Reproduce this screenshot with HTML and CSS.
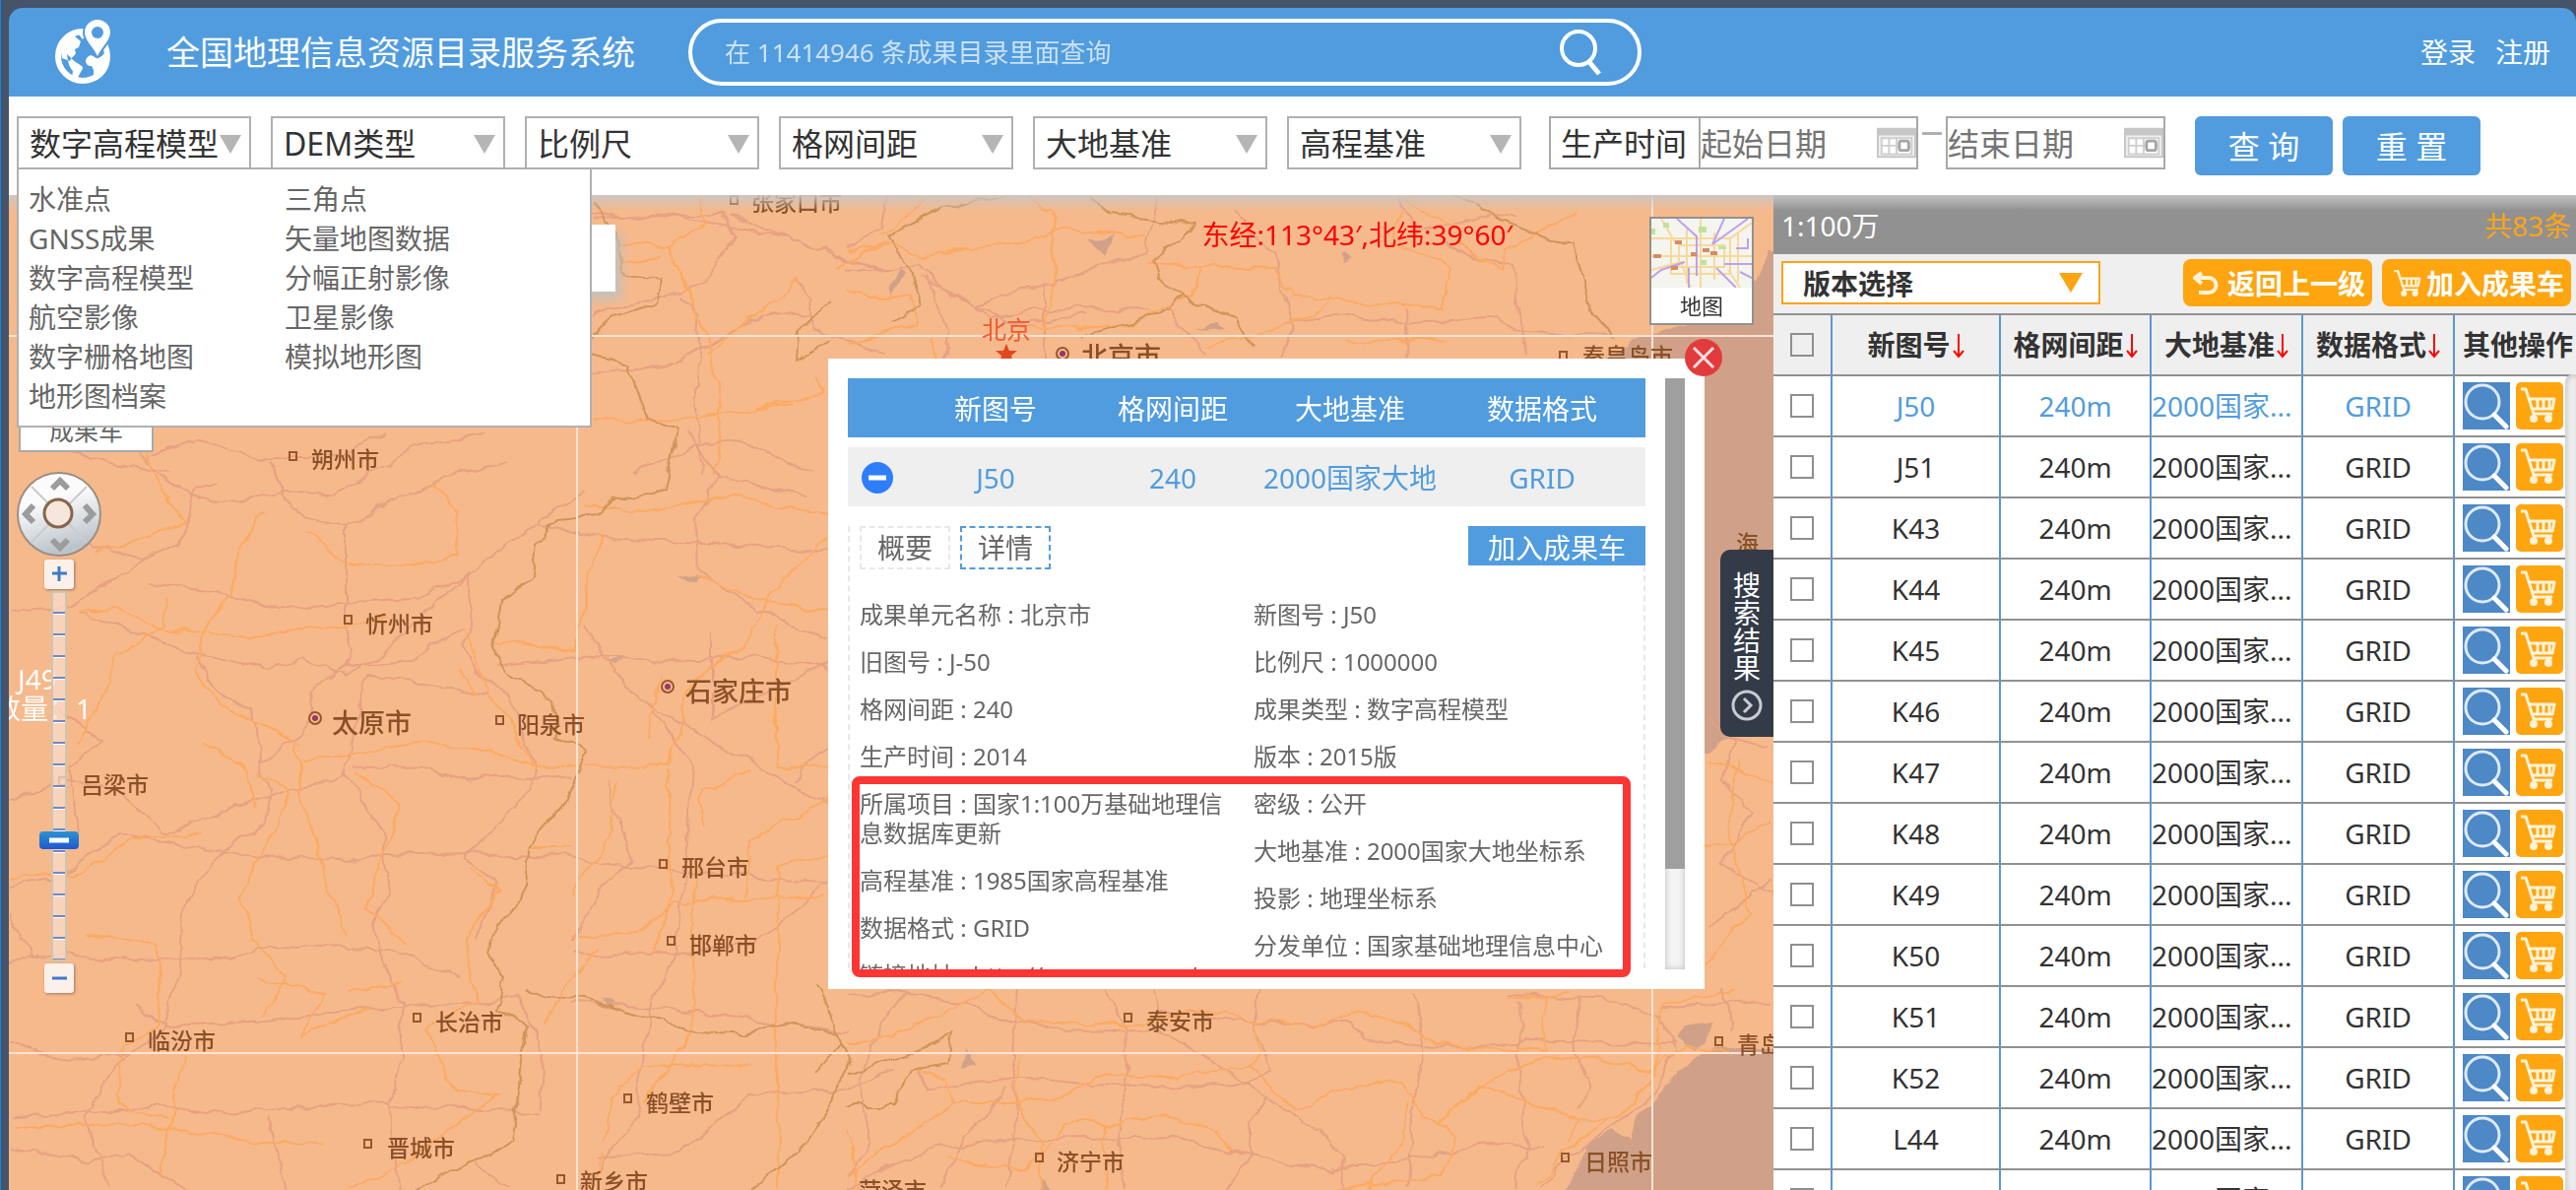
FILE: index.html
```html
<!DOCTYPE html>
<html lang="zh-CN">
<head>
<meta charset="utf-8">
<title>全国地理信息资源目录服务系统</title>
<link rel="stylesheet" href="styles.css">
</head>
<body>
<svg class="defs" aria-hidden="true">
  <symbol id="i-lens" viewBox="0 0 48 48"><rect width="48" height="48" fill="#4d88c7"/><circle cx="20" cy="20" r="17" fill="none" stroke="#dfeaf6" stroke-width="3"/><path d="M32 33L44 45" stroke="#fff" stroke-width="5" stroke-linecap="round"/></symbol>
  <symbol id="i-cart" viewBox="0 0 48 48"><path d="M5 7h5l8 25h19M14 17h25l-2 10H17M22 17v9M28 17v9M34 17v9" fill="none" stroke="#fff3d8" stroke-width="3" stroke-linejoin="round"/><circle cx="18" cy="37" r="4" fill="#fff3d8"/><circle cx="33" cy="37" r="4" fill="#fff3d8"/></symbol>
  <symbol id="i-sort" viewBox="0 0 12 26"><path d="M6 1v22M1 18l5 6 5-6" fill="none" stroke="#f00" stroke-width="2"/></symbol>
  <symbol id="i-cal" viewBox="0 0 42 32"><path d="M0 0h42v32H0z" fill="#c6c6c6"/><path d="M2 8h38v22H2z" fill="#efefef"/><path d="M5 11h32v17H5z" fill="#fff"/><path d="M5 11h32v17H5zM5 19h32M13 11v17M21 11v17" fill="none" stroke="#cfcfcf" stroke-width="2"/><rect x="24" y="14" width="10" height="10" rx="2" fill="#fff" stroke="#a5a5a5" stroke-width="3"/></symbol>
</svg>
<div class="app">
  <header class="top">
    <svg class="logo" viewBox="0 0 56 66" aria-hidden="true">
      <circle cx="28" cy="37" r="25" fill="none" stroke="#fff" stroke-width="6"/>
      <path d="M28 10L14 15 5 27l2 12 8 3c1-4 4-4 6-8l-1-4 4-2 2-6-6-5 4-2 4 5 2-4zM12 35c4 3 5 6 12 10l4 3c0 4-4 6-5 13l-6-2 1-7c-4-4-5-9-6-17zM31 41c2-5 6-6 9-3 3 2 7 1 13-8l2 8c1 12-6 20-14 24l-2-6c1-5-1-7-2-9-4 0-6-2-6-6z" fill="#fff"/>
      <path d="M43 40C38 30 28 23 28 13a15 15 0 0 1 30 0c0 10-10 17-15 27z" fill="#519cde"/>
      <path d="M43 37C39 28 30 21 30 13a13 13 0 0 1 26 0c0 8-9 15-13 24z" fill="#fff"/>
      <circle cx="43" cy="13" r="6" fill="#519cde"/>
    </svg>
    <h1 class="title">全国地理信息资源目录服务系统</h1>
    <form class="search" role="search">
      <input class="search-input" type="text" aria-label="查询" placeholder="在 11414946 条成果目录里面查询">
      <button class="search-go" type="button" aria-label="搜索"><svg viewBox="0 0 44 50"><circle cx="20" cy="21" r="17" fill="none" stroke="#fff" stroke-width="4"/><path d="M31 35l10 12" stroke="#fff" stroke-width="5"/></svg></button>
    </form>
    <nav class="account"><a href="#">登录</a><a href="#">注册</a></nav>
  </header>

  <div class="filters">
    <div class="pick first">
      <select class="box" aria-label="成果类型"><option>数字高程模型</option></select>
      <ul class="menu">
        <li><a href="#">水准点</a></li><li><a href="#">三角点</a></li>
        <li><a href="#">GNSS成果</a></li><li><a href="#">矢量地图数据</a></li>
        <li><a href="#">数字高程模型</a></li><li><a href="#">分幅正射影像</a></li>
        <li><a href="#">航空影像</a></li><li><a href="#">卫星影像</a></li>
        <li><a href="#">数字栅格地图</a></li><li><a href="#">模拟地形图</a></li>
        <li><a href="#">地形图档案</a></li>
      </ul>
    </div>
    <div class="pick"><select class="box" aria-label="DEM类型"><option>DEM类型</option></select></div>
    <div class="pick"><select class="box" aria-label="比例尺"><option>比例尺</option></select></div>
    <div class="pick"><select class="box" aria-label="格网间距"><option>格网间距</option></select></div>
    <div class="pick"><select class="box" aria-label="大地基准"><option>大地基准</option></select></div>
    <div class="pick"><select class="box" aria-label="高程基准"><option>高程基准</option></select></div>
    <div class="dates">
      <label class="date-label" for="d1">生产时间</label>
      <div class="date"><input id="d1" type="text" placeholder="起始日期"><svg class="cal"><use href="#i-cal"/></svg></div>
      <span class="dash"></span>
      <div class="date"><input type="text" aria-label="结束日期" placeholder="结束日期"><svg class="cal"><use href="#i-cal"/></svg></div>
    </div>
    <div class="actions"><button class="act" type="button">查 询</button><button class="act" type="button">重 置</button></div>
  </div>

  <main class="main">
    <section class="map">
      <svg class="canvas" aria-label="地图">
        <defs>
          <filter id="wob" x="-5%" y="-5%" width="110%" height="110%" color-interpolation-filters="sRGB"><feTurbulence type="fractalNoise" baseFrequency="0.035" numOctaves="3" seed="4"/><feDisplacementMap in="SourceGraphic" scale="14" xChannelSelector="R" yChannelSelector="G"/></filter>
        </defs>
        <g transform="translate(-9 -198)">
          <g class="sea" filter="url(#wob)">
            <path d="M1815 255h-20l-10 30-60 40-70 20-60 40v380h140l20-20 60-10z"/>
            <path d="M1815 1064h-75l-20 12-16 10-14 16-12 20-16 10-6 22-18-6-24 12-8 22-8 14-14 24-6 10h260z"/>
            <path d="M1700 1048l10-14 30-4-6 20-12 10zM1105 148l30-10-10 30z" transform="translate(0 6)"/>
            <path d="M980 1065l10 18-14 4zM1060 1196l8 14h-12zM618 672l16-6-10 8zM690 585l20-4-4 8zM906 288l8-16 4 6-10 20zM1105 243l30-4-12 20zM1215 336l20-8 8 10zM1364 255l10 6-6 4zM610 1014l14 4-2 6z"/>
          </g>
          <g class="road" filter="url(#wob)">
            <!-- north-west sheet -->
            <g class="pink" transform="scale(.574 .3333)">
              <path d="M1040 650L1140 660 1280 650 1300 720 1250 860 1050 960M1050 665L1180 650 1400 730 1568 830M1410 860L1430 900 1435 1000 1568 1080M1200 900L1240 960 1230 1200 1240 1440M1040 1140L1190 1110 1290 1010 1360 950 1430 960M270 1380L350 1340 470 1400 600 1390 680 1320M1120 1440L1250 1350 1310 1340 1440 1440M1290 660L1560 830M60 1310L160 1400 300 1440"/>
            </g>
            <g class="gold" transform="scale(.574 .3333)">
              <path d="M1070 740L1180 750 1250 680 1240 600M1180 750L1220 900 1250 1010 1265 1110 1280 1240 1260 1440M1080 800L1170 780M1415 850L1390 890 1350 940 1250 1070M1480 810L1568 740M1340 1240L1460 1200 1440 1150M1050 1280L1200 1280 1400 1230"/>
            </g>
            <!-- Beijing and Hebei coast -->
            <g class="pink" transform="translate(860 0) scale(.574 .3333)">
              <path d="M0 820L60 830 130 800 170 880 220 920 250 970 340 940 540 940M70 600L60 700 0 760M130 840L190 900 300 990 420 960M550 600L530 770 350 870 230 930M680 640L760 780 790 1000 770 1090M790 980L900 960 1000 990 1150 970 1190 1010 1360 1020M990 940V1090M140 840L180 1000 170 1090M350 870L350 1090M1060 750L1180 820 1200 1090M970 600L1010 700 1180 650M560 940L640 1080"/>
            </g>
            <g class="gold" transform="translate(860 0) scale(.574 .3333)">
              <path d="M0 770L80 740 140 780 350 720 370 690 530 720M320 600L360 640 370 850 350 1000M530 800L620 810 760 820 790 900 1050 940 1075 820 970 740 980 640M620 810L610 900 500 990 310 1000M1080 740L1160 830 1170 760 1290 640M1080 700L980 600M150 600L60 720M0 890L110 900 120 990 0 1050M860 900L830 960 640 1060M150 1030L160 1090M880 1040L1060 1030"/>
            </g>
            <!-- Shanxi and southern Hebei -->
            <g class="pink" transform="scale(.5485 .4898) translate(0 898)">
              <path d="M230 0L300 90 390 145 520 120 620 130 780 20 900 0M270 260L330 230 360 120 400 100M270 260L180 240 110 160M270 260L130 360 20 370M150 370L270 420 370 460 490 490 560 460 640 500 700 460 860 300 1000 190 1080 110M280 310L400 330 520 360 650 350 780 340 870 290 870 400 850 440 890 510 940 540 990 680 980 740 860 880 920 930 880 1050M500 60L540 160 640 190 820 90 940 60M640 190V380L650 470 580 540 560 620 480 680 500 740 480 820 420 860 340 980 330 1120 300 1240 200 1330 160 1420 200 1560M360 460L400 540 470 570 480 680M640 700L710 840 720 950 690 1020 740 1180 740 1290 720 1420 740 1568M20 1000L60 1080 20 1100M60 1080L240 1090 400 1090 520 1060 720 1070 850 1130M20 940L110 920 220 830 320 850 480 880 640 880 870 870 1060 880 1120 890 1280 910 1530 930M20 760L110 720 220 740 310 830 480 760 640 710 660 600 680 500 850 530 900 540M660 690L780 690 860 720 1060 710M1000 190L1140 220 1390 230 1530 240M1270 0L1330 90 1290 180 1290 280 1400 370 1530 420M920 480L1060 460 1290 470 1390 460 1530 490M1080 400L1170 540 1290 620 1390 680 1530 770M1200 560L1280 680 1270 870 1250 1090 1210 1160 1190 1280 1180 1420 1080 1568M1060 1080L1270 1080 1400 1060 1530 930M1320 410V590L1530 480M1120 720L1170 880 1110 950 1060 1050M20 1420L160 1410 290 1390 430 1410 620 1390 840 1400 1000 1410M250 1190L310 1230 480 1220 690 1190 960 1170 1010 1290 1000 1400M20 1260L110 1300 250 1290M1110 1500L1260 1490 1390 1370 1568 1360M1060 1180L1300 1200 1568 1240M500 1420L530 1568M20 1480L160 1510 240 1490 340 1568M1330 90L1500 130M1470 720L1530 640M880 1510L940 1568"/>
              <path d="M100 560L190 640 130 690 140 830M860 400L760 470 640 480"/>
            </g>
            <g class="gold" transform="scale(.5485 .4898) translate(0 898)">
              <path d="M260 0L300 120 340 190 180 250M490 160L440 250 430 330 380 410 360 490 400 560 560 640M800 100L850 170 850 250 740 280 640 270 570 200M150 370L210 360 310 410 460 420 640 400 720 380M310 340L300 400 220 460 180 560 150 640M560 680L680 660 780 640 880 650 1010 690 1240 690M860 410L900 540 950 600 990 690M550 640L560 760 600 900 640 1040M480 700L540 740 480 880 440 960 470 1050 530 1130 480 1210M660 700L740 760 710 880 680 980 750 1060M380 640L460 700 470 780M20 920L160 910 240 840 380 830M160 1040L290 1060 300 1150 290 1230 230 1270 220 1390 310 1420M870 900L920 950 860 1050 880 1170 790 1240 840 1360 920 1370 740 1520 640 1568M480 1130L600 1160 560 1250 690 1190M640 1160L740 1140M20 1440L250 1430 400 1460 600 1480M300 1540L320 1390 350 1290M920 430L1060 450 1090 310 1110 210M1240 690L1280 520 1380 430 1460 290 1530 210M1440 400V690L1530 690M1220 500L1200 640M1300 820L1300 740 1390 700M1240 700L1240 960 1210 1080M1290 880L1280 1240 1190 1390M1140 720L1130 820 1060 950M980 860L1060 860M1380 960L1390 840 1530 760M1060 1040L1180 1040 1250 970 1530 960M1530 870L1440 900 1440 1568M1290 290L1400 350 1530 370M1080 150L1200 160 1360 130 1530 170M850 490L880 540M1120 1470L1130 1380 1190 1310 1390 1310M1000 1220L1110 1060M1090 1568L1120 1490"/>
            </g>
            <!-- Shandong -->
            <g class="pink" transform="translate(860 960) scale(.5995 .3333)">
              <path d="M0 150L100 140 200 170 240 210 380 260 520 250 620 350 700 450 800 560 840 640V744M440 130L470 250 475 400 460 560 470 744M290 130L280 330 290 500 270 744M100 140L60 230 20 400 40 600 0 700M120 380L140 430 300 400 420 420 540 430 680 430 720 380 690 250 700 130M0 440L80 380M0 740L140 620 290 590 530 580 690 640 820 690 960 650 1090 600 1180 610M520 130L530 200 730 240 840 230 880 290 1000 310 1200 290 1400 300M960 130L975 330 960 500 950 744M1120 150L1280 160 1380 220 1400 320 1370 450 1290 560 1200 680 1180 744M1140 170V400L1150 600 1130 744M1240 150L1230 300 1260 430 1240 500M270 430L200 590 160 744M710 460L680 540 690 640 640 744M1380 190L1568 170M1480 130L1500 260"/>
              <path d="M1460 -700L1500 -620 1480 -500 1530 -400 1480 -250 1568 -150M1480 -640L1560 -600M1460 -60L1568 -200"/>
            </g>
            <g class="gold" transform="translate(860 960) scale(.5995 .3333)">
              <path d="M0 300L80 280 240 130 300 230 460 240 560 210 640 200 680 230 790 240 870 200 960 250 1000 300 1180 320 1180 160 1120 160M120 380L170 400 180 480 290 480 380 450 420 390 550 400 680 370 760 500 840 430 940 420 1000 540 1070 430 1180 490 1240 530 1220 600M680 370L700 330 690 240M180 480L0 700M170 650L310 680 370 540 450 540 540 520 620 560 650 620M950 480L940 600 880 744M1000 540L1030 580 1010 700 820 744M290 340V480L330 600V744M1070 430L1180 340 1290 350 1360 380 1420 300 1500 330M1240 530L1310 520 1350 440 1370 380 1380 180 1500 140M1170 744L1210 640 1290 520M440 540V744M0 560L20 744M1180 160L1220 130"/>
              <path d="M1460 -560L1568 -500M1455 -300L1500 -320 1568 -380M1510 -560L1490 -350 1530 -100 1455 60"/>
            </g>
          </g>
          <g class="border-line" filter="url(#wob)">
            <path d="M602 203l24 35 6 40 40 5-6 25-45 15-30 30-30 15M602 360l36 10 20 55 30 12-12 60-50 10-18 16-40 5-24 26-4 30-30 26-8 44 10 28 48 30 6 36 30 14-26 60-34 40-4 50-30 30-10 26 20 20-8 36 32 16-8 60-10 60-60 30-60 34-50-6-70 14"/>
            <path d="M535 1008l60 6 60 20 40 12 60 4 34-12 60 10 14 30-20 40-20 40-70 60M830 1000l24 60-26 30M905 330l28-20-12-40-20-30 60-30 90-20M1105 198l20 20 90 10-46 36 6 20 28 16-26 20-80 20M1203 302l50 20 20 30M1478 198l40 25 80 25 20 70 20 22M860 1090l60-20 46-20-6 30-34 6-20 36-46 0M845 345l-36 20 2-30 34-30"/>
          </g>
          <path class="grid-line" d="M586 198V1208M1678 198V1208M9 341H1801M9 1069H1801"/>
          <g class="pin">
            <path d="M294 459h7v8h-7zM350 625h7v8h-7zM504 727h7v8h-7zM60 789h7v8h-7zM670 873h7v8h-7zM678 951h7v8h-7zM420 1029h7v8h-7zM128 1049h7v8h-7zM634 1111h7v8h-7zM370 1157h7v8h-7zM566 1193h7v8h-7zM742 199h7v8h-7zM1584 357h7v8h-7zM1142 1029h7v8h-7zM1742 1053h7v8h-7zM1052 1171h7v8h-7zM1586 1171h7v8h-7z"/>
            <circle cx="320" cy="729" r="6"/><circle cx="678" cy="697" r="6"/><circle cx="1079" cy="359" r="6"/>
          </g>
          <g class="core"><circle cx="320" cy="729" r="3"/><circle cx="678" cy="697" r="3"/><circle cx="1079" cy="359" r="3"/></g>
          <g class="town">
            <text x="316" y="475">朔州市</text><text x="371" y="642">忻州市</text><text x="525" y="744">阳泉市</text>
            <text x="82" y="805">吕梁市</text><text x="692" y="889">邢台市</text><text x="700" y="968">邯郸市</text>
            <text x="442" y="1046">长治市</text><text x="150" y="1065">临汾市</text><text x="656" y="1128">鹤壁市</text>
            <text x="393" y="1174">晋城市</text><text x="589" y="1208">新乡市</text><text x="763" y="214">张家口市</text>
            <text x="1607" y="370">秦皇岛市</text><text x="1164" y="1045">泰安市</text><text x="1764" y="1069">青岛市</text>
            <text x="1073" y="1188">济宁市</text><text x="1609" y="1188">日照市</text><text x="872" y="1217">菏泽市</text>
            <text x="1763" y="560">海</text>
          </g>
          <g class="city"><text x="337" y="744">太原市</text><text x="696" y="712">石家庄市</text><text x="1098" y="372">北京市</text></g>
          <text class="capital" x="997" y="344">北京</text>
          <path fill="#e0491f" d="M1022 349l3 7h8l-6 5 2 8-7-5-7 5 2-8-6-5h8z"/>
        </g>
      </svg>
      <div class="tools"></div>
      <a class="cart-tab" href="#">成果车</a>
      <p class="sheet"><span>J49</span><span>数量：1</span></p>
      <div class="nav">
        <svg class="compass" viewBox="0 0 88 88" aria-hidden="true">
          <defs><linearGradient id="g1" x2=".3" y2="1"><stop offset=".4" stop-color="#fbfbfb"/><stop offset="1" stop-color="#bcc4cb"/></linearGradient><linearGradient id="g2" x2="0" y2="1"><stop stop-color="#2b93cf"/><stop offset="1" stop-color="#1f57d0"/></linearGradient></defs>
          <circle cx="44" cy="44" r="42" fill="url(#g1)" stroke="#9a8f86" stroke-width="2"/>
          <path d="M16 16l56 56M72 16L16 72" stroke="#c9cbcd" stroke-width="2"/>
          <circle cx="43" cy="43" r="14" fill="#f6e6dc" stroke="#87644d" stroke-width="3"/>
          <path d="M37 18l8-8 8 8M37 70l8 8 8-8M18 35l-8 9 8 8M70 35l8 9-8 8" fill="none" stroke="#9c9c9c" stroke-width="6"/>
        </svg>
        <button class="zoom-btn" type="button" aria-label="放大"><svg viewBox="0 0 30 30"><path d="M8 14h15M15 7v15" stroke="#3d7bc8" stroke-width="3"/></svg></button>
        <div class="track"><svg class="handle" viewBox="0 0 40 18"><rect width="40" height="18" rx="4" fill="url(#g2)"/><path d="M10 9h20" stroke="#fff" stroke-width="5"/></svg></div>
        <button class="zoom-btn" type="button" aria-label="缩小"><svg viewBox="0 0 30 30"><path d="M8 15h15" stroke="#3d7bc8" stroke-width="3"/></svg></button>
      </div>
      <p class="coords">东经:113°43′,北纬:39°60′</p>
      <button class="base" type="button">
        <svg viewBox="0 0 102 70" aria-hidden="true"><path fill="#f3f5ee" d="M0 0h102v70H0z"/><path fill="none" stroke="#f8d999" stroke-width="2" d="M20 20h60v36H20zM28 27h46v22H28zM0 38h102M50 0v70M36 10v56M64 14v48M0 52l30-8 10 26M10 0l14 24M88 14v50M80 20l22-16M0 20h24M78 52l12 18"/><path fill="none" stroke="#bfa0ee" stroke-width="2" d="M26 0l20 18v40M62 26l12-26M62 26l36-26M0 60l10-8 24-8M38 50v20M66 50l20 20M74 46h28M90 54l12 6M98 20v10h-12"/><path fill="#d98a66" d="M24 22h7v4h-7zM40 34h6v4h-6zM52 30h7v4h-7zM60 33h7v4h-7zM2 36h8v4H2zM20 48h7v4h-7z"/><path fill="#bfe39a" d="M12 4h6v5h-6zM48 8h8v6h-8zM0 10h4v6H0zM68 28h8v3h-8zM50 42h6v5h-6z"/></svg>
        <span>地图</span>
      </button>
      <button class="side-tab" type="button"><span>搜索结果</span><svg viewBox="0 0 32 32" aria-hidden="true"><circle cx="16" cy="16" r="14" fill="none" stroke="#c8ccd2" stroke-width="3"/><path d="M13 9l7 7-7 7" fill="none" stroke="#c8ccd2" stroke-width="3"/></svg></button>

      <div class="dialog" role="dialog" aria-label="成果详情">
        <button class="close" type="button" aria-label="关闭"><svg viewBox="0 0 38 38"><circle cx="19" cy="19" r="19" fill="#e23b3e"/><path d="M9 9l20 20M29 9L9 29" stroke="#fbdede" stroke-width="3"/></svg></button>
        <div class="scroll">
          <table class="summary">
            <colgroup><col class="s0"><col class="s1"><col class="s1"><col class="s1"><col></colgroup>
            <thead><tr><th></th><th>新图号</th><th>格网间距</th><th>大地基准</th><th>数据格式</th></tr></thead>
            <tbody><tr><td><svg class="minus" viewBox="0 0 32 32"><circle cx="16" cy="16" r="16" fill="#2e7dfb"/><path d="M7 16h18" stroke="#fff" stroke-width="5"/></svg></td><td>J50</td><td>240</td><td>2000国家大地</td><td>GRID</td></tr></tbody>
          </table>
          <div class="detail">
            <div class="tabs"><button class="tab" type="button">概要</button><button class="tab on" type="button">详情</button><button class="add" type="button">加入成果车</button></div>
            <div class="cols">
              <div class="col"><p>成果单元名称 : 北京市</p><p>旧图号 : J-50</p><p>格网间距 : 240</p><p>生产时间 : 2014</p><p>所属项目 : 国家1:100万基础地理信息数据库更新</p><p>高程基准 : 1985国家高程基准</p><p>数据格式 : GRID</p><p>链接地址 : http://www.ngcc.cn/</p></div>
              <div class="col"><p>新图号 : J50</p><p>比例尺 : 1000000</p><p>成果类型 : 数字高程模型</p><p>版本 : 2015版</p><p>密级 : 公开</p><p>大地基准 : 2000国家大地坐标系</p><p>投影 : 地理坐标系</p><p>分发单位 : 国家基础地理信息中心</p></div>
            </div>
          </div>
        </div>
        <div class="bar"><div class="thumb"></div></div>
        <div class="mark"></div>
      </div>
    </section>

    <aside class="panel">
      <div class="panel-head"><span>1:100万</span><span class="count">共83条</span></div>
      <div class="toolbar">
        <div class="version"><select aria-label="版本选择"><option>版本选择</option></select></div>
        <button class="tool" type="button"><svg class="back" viewBox="0 0 28 28" aria-hidden="true"><path d="M9 3L2 8l7 6M3 8h13a7 7 0 0 1 0 15H6" fill="none" stroke="#fff3d8" stroke-width="4"/></svg>返回上一级</button>
        <button class="tool" type="button"><svg class="cart" viewBox="2 4 42 40" aria-hidden="true"><use href="#i-cart" width="48" height="48"/></svg>加入成果车</button>
      </div>
      <div class="list">
        <table class="results">
          <colgroup><col class="r0"><col class="r1"><col class="r2"><col class="r3"><col class="r3"><col></colgroup>
          <thead><tr><th><input type="checkbox" aria-label="全选"></th><th>新图号<svg><use href="#i-sort"/></svg></th><th>格网间距<svg><use href="#i-sort"/></svg></th><th>大地基准<svg><use href="#i-sort"/></svg></th><th>数据格式<svg><use href="#i-sort"/></svg></th><th>其他操作</th></tr></thead>
          <tbody id="rows"></tbody>
        </table>
        <div class="rail"></div>
      </div>
    </aside>
  </main>
</div>
<script src="rows.js"></script>
</body>
</html>
```
FILE: rows.js
```js
const sheets = ['J50', 'J51', 'K43', 'K44', 'K45', 'K46', 'K47', 'K48', 'K49', 'K50', 'K51', 'K52', 'L44', 'L45'];
document.getElementById('rows').innerHTML = sheets.map((s, i) => `
  <tr class="${i ? '' : 'current'}">
    <td><input type="checkbox" aria-label="${s}"></td>
    <td>${s}</td><td>240m</td><td class="datum">2000国家...</td><td>GRID</td>
    <td><div class="ops">
      <button type="button" aria-label="查看 ${s}"><svg><use href="#i-lens"/></svg></button>
      <button type="button" class="buy" aria-label="加入 ${s}"><svg><use href="#i-cart"/></svg></button>
    </div></td>
  </tr>`).join('');
```
FILE: styles.css
```css
* { box-sizing: border-box; }
body { margin: 0; background: #455469; color: #333; font: 28px/40px "Noto Sans", "Noto Sans CJK SC", sans-serif; }
button, input, select { font: inherit; color: inherit; margin: 0; padding: 0; border: 0; border-radius: 0; background: none; appearance: none; }
a { color: inherit; text-decoration: none; }
p, h1, ul { margin: 0; padding: 0; list-style: none; }
svg { display: block; }
.defs { position: absolute; width: 0; height: 0; }

.app { display: flex; flex-direction: column; height: 100vh; overflow: hidden; padding: 8px 0 0 8px; border-left: 1px solid #1683e0; }

.top { display: flex; align-items: center; flex: none; height: 90px; padding: 0 26px 0 47px; background: #519cde; color: #fff; border-radius: 14px 14px 0 0; }
.logo { width: 56px; height: 66px; overflow: visible; }
.title { margin-left: 57px; font-size: 34px; font-weight: 400; white-space: nowrap; }
.search { display: flex; align-items: center; width: 968px; height: 68px; margin-left: 54px; padding: 0 36px 0 33px; border: 4px solid #fff; border-radius: 34px; }
.search-input { flex: 1; font-size: 26px; }
.search-input::placeholder { color: #fff; opacity: .7; }
.search-go svg { width: 44px; height: 50px; }
.account { display: flex; gap: 20px; margin-left: auto; }

.filters { display: flex; flex: none; height: 100px; padding: 20px 8px; background: #fff; font-size: 32px; }
.pick { position: relative; width: 238px; height: 54px; margin-right: 20px; }
.pick::after { content: ""; position: absolute; right: 10px; top: 19px; border: 11px solid transparent; border-top: 19px solid #b5b5b5; border-bottom: 0; }
.box { width: 100%; height: 54px; padding: 2px 0 0 11px; border: 2px solid #b0b0b0; line-height: 48px; }
.menu { position: absolute; z-index: 5; top: 52px; left: 0; width: 584px; height: 264px; display: grid; grid-template-columns: 260px 1fr; grid-auto-rows: 40px; padding: 10px; border: 2px solid #b0b0b0; background: #fff; color: #666; font-size: 28px; }
.dates { display: flex; margin-left: 8px; }
.date-label { width: 154px; height: 54px; padding: 2px 0 0 10px; border: 2px solid #a9a9a9; line-height: 48px; }
.date-label + .date { margin-left: -2px; }
.date { position: relative; display: flex; width: 223px; height: 54px; border: 2px solid #a9a9a9; overflow: hidden; }
.date input { width: 180px; flex: 1; padding-top: 2px; }
.date input::placeholder { color: #757575; }
.cal { position: absolute; right: 0; top: 9px; width: 40px; height: 32px; }
.dash { width: 20px; height: 3px; margin: 16px 4px 0; background: #b0b0b0; }
.actions { display: flex; gap: 10px; margin-left: 30px; }
.act { width: 140px; height: 60px; padding-top: 2px; border-radius: 6px; background: #519cde; color: #fff; }

.main { position: relative; display: flex; flex: 1; min-height: 0; }
.main::after { content: ""; position: absolute; inset: 0 0 auto; height: 16px; background: linear-gradient(rgba(200, 200, 200, .9), rgba(200, 200, 200, 0)); pointer-events: none; }
.map { position: relative; flex: 1; overflow: hidden; background: #f6b98c; }
.canvas { position: absolute; inset: 0; width: 100%; height: 100%; }
.sea { fill: #d0a188; }
.road path { fill: none; stroke-width: 2; vector-effect: non-scaling-stroke; stroke-linejoin: round; }
.pink path { stroke: #e6a182; }
.gold path { stroke: #fbaa60; }
.border-line { fill: none; stroke: #cd9559; stroke-width: 2; stroke-linejoin: round; }
.grid-line { stroke: #fbe3d2; stroke-width: 2; }
.pin { fill: none; stroke: #97572b; stroke-width: 2; }
.core { fill: #97376a; }
.town, .city { fill: #8a5027; font-weight: 500; }
.town { font-size: 23px; }
.city { font-size: 27px; }
.capital { fill: #f05a35; font-size: 25px; }

.tools { position: absolute; left: 8px; top: 30px; width: 608px; height: 68px; background: #fff; box-shadow: 6px 8px 10px #c5c0ba; }
.cart-tab { position: absolute; left: 10px; top: 218px; width: 137px; height: 43px; border: 2px solid #a9a9a9; background: #fff; color: #666; font-size: 25px; line-height: 38px; text-align: center; }
.sheet { position: absolute; left: -16px; top: 476px; display: flex; flex-direction: column; color: #fff; line-height: 30px; white-space: nowrap; }
.sheet span:first-child { padding-left: 25px; }
.nav { position: absolute; left: 7px; top: 280px; width: 88px; display: flex; flex-direction: column; align-items: center; }
.compass { width: 88px; height: 88px; }
.zoom-btn { width: 30px; height: 30px; margin-top: 2px; border-radius: 3px; background: #fbf1ea; box-shadow: 1px 1px 3px #a0745a; }
.track { position: relative; width: 16px; height: 376px; margin-top: 2px; border: 2px solid #cbc6b0; background: repeating-linear-gradient(rgba(249, 221, 205, .75) 0 19px, #7088c4 19px 21px, #fff 21px 22px); }
.handle { position: absolute; left: -14px; top: 242px; width: 40px; height: 18px; }
.coords { position: absolute; right: 265px; top: 20px; color: #f00; }
.base { position: absolute; right: 20px; top: 22px; width: 106px; height: 110px; border: 2px solid #919191; background: #fff; font-size: 22px; line-height: 36px; text-align: center; }
.base svg { width: 102px; height: 70px; }
.side-tab { position: absolute; right: 0; top: 360px; width: 54px; height: 190px; display: flex; flex-direction: column; align-items: center; justify-content: center; gap: 8px; padding-top: 6px; border-radius: 10px 0 0 10px; background: #333b48; color: #fff; line-height: 28px; }
.side-tab span { width: 28px; }
.side-tab svg { width: 32px; height: 32px; }

.dialog { position: absolute; left: 832px; top: 166px; width: 890px; height: 640px; display: flex; justify-content: space-between; padding: 20px; background: #fff; }
.close { position: absolute; right: -18px; top: -20px; }
.close svg { width: 38px; height: 38px; }
.scroll { width: 810px; height: 600px; overflow: hidden; }
.summary { width: 100%; table-layout: fixed; border-spacing: 0; text-align: center; }
.summary .s0 { width: 60px; }
.summary .s1 { width: 180px; }
.summary th, .summary td { height: 60px; padding: 2px 0 0; font-weight: 400; }
.summary th { background: #519cde; color: #fff; }
.summary tbody td { border-top: 10px solid #fff; height: 70px; background: #efefef; color: #519cde; background-clip: padding-box; }
.minus { width: 32px; height: 32px; margin-left: 14px; }
.detail { margin-top: 20px; border: 2px dashed #e8e8e8; border-width: 0 2px; padding-left: 10px; color: #666; }
.tabs { display: flex; gap: 10px; align-items: flex-start; }
.tab { width: 92px; height: 44px; border: 2px dashed #e8e8e8; }
.tab.on { border-color: #519cde; }
.add { width: 180px; height: 40px; margin: 0 -2px 0 auto; padding-top: 2px; background: #519cde; color: #fff; }
.cols { display: grid; grid-template-columns: 380px 390px; column-gap: 20px; padding-top: 31px; font-size: 24px; line-height: 30px; }
.col p { margin-bottom: 18px; }
.bar { width: 20px; height: 600px; background: #f4f4f4; box-shadow: inset 0 0 6px #bbb; }
.thumb { height: 83%; background: #9f9f9f; }
.mark { position: absolute; left: 24px; top: 424px; width: 791px; height: 204px; border: 8px solid #fd3634; border-radius: 8px; }

.panel { display: flex; flex-direction: column; width: 815px; background: #fff; }
.panel-head { display: flex; justify-content: space-between; align-items: center; height: 60px; flex: none; padding: 2px 5px 0 8px; background: #919191; color: #fff; }
.count { color: #ffa412; }
.toolbar { display: flex; align-items: center; flex: none; height: 62px; padding: 0 5px 2px 8px; gap: 10px; border-bottom: 2px solid #919191; background: #efefef; font-weight: 700; }
.version { position: relative; width: 324px; margin-right: auto; }
.version::after { content: ""; position: absolute; right: 18px; top: 12px; border: 12px solid transparent; border-top: 20px solid #ffa412; border-bottom: 0; }
.version select { display: block; width: 100%; height: 44px; padding: 2px 0 0 20px; border: 2px solid #ffa412; background: #fff; font-weight: 700; line-height: 38px; }
.tool { display: flex; align-items: center; justify-content: space-between; width: 192px; height: 48px; padding: 2px 7px 0 10px; border-radius: 8px; background: #ffa50f; color: #fff; white-space: nowrap; }
.back { width: 28px; height: 28px; }
.cart { width: 32px; height: 32px; }
.list { position: relative; flex: 1; min-height: 0; overflow: hidden; }
.results { width: 100%; table-layout: fixed; border-spacing: 0; text-align: center; }
.r0 { width: 60px; }
.r1 { width: 171px; }
.r2 { width: 153px; }
.r3 { width: 154px; }
.results th, .results td { height: 62px; padding: 0; border-right: 2px solid #5b97d3; border-bottom: 2px solid #919191; white-space: nowrap; }
.results th { background: #efefef; }
.results th:last-child, .results td:last-child { border-right: 0; padding-left: 8px; text-align: left; }
.results th svg { display: inline-block; width: 12px; height: 26px; margin-left: 2px; vertical-align: -3px; }
.results td.datum { text-align: left; }
.results input { display: block; width: 24px; height: 24px; margin: 0 auto; border: 2px solid #8f8f8f; background: #fff; }
.results th input { background: none; }
.current { color: #519cde; }
.ops { display: flex; gap: 6px; }
.ops button, .ops svg { width: 48px; height: 48px; }
.buy { border-radius: 5px; background: #ffa50f; }
.rail { position: absolute; right: 0; top: 60px; bottom: 0; width: 11px; border-radius: 8px 0 0; background: #ececec; box-shadow: inset 2px 2px 4px #ccc; }
```
